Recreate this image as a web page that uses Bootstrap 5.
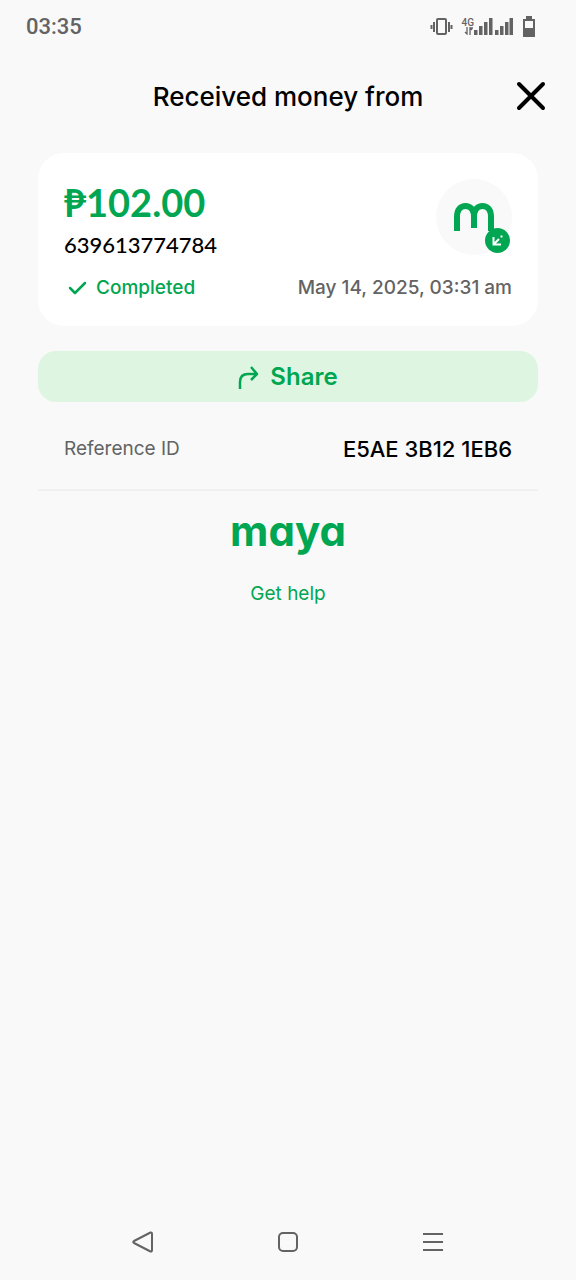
<!DOCTYPE html>
<html lang="en">
<head>
<meta charset="utf-8">
<meta name="viewport" content="width=device-width, initial-scale=1">
<title>Received money from</title>
<link rel="stylesheet" href="https://cdn.jsdelivr.net/npm/bootstrap@5.3.0/dist/css/bootstrap.min.css">
<style>
:root { --brand: #00a651; --ink: #000; --muted: #636363; --page: #f9f9f9; }
body { background: var(--page); color: var(--ink); font-family: Inter, "Liberation Sans", sans-serif; }
svg { display: block; flex: none; }
.status { height: 54px; padding: 0 40px 0 26px; color: var(--muted); font: 500 22px/28px Roboto, sans-serif; }
.net { font: 500 10px/8px Roboto, sans-serif; }
.topbar { height: 86px; }
.topbar h1 { font-size: 26px; line-height: 32px; font-weight: 500; }
.close-btn { right: 28px; top: 24px; }
.sheet { padding: 13px 38px 0; }
.receipt { border-radius: 26px; padding: 26px; }
.brand { color: var(--brand); }
.amount { font: 700 38px/46px Lato, Inter, sans-serif; }
.digits { font: 500 22px/40px Lato, sans-serif; }
.meta { font-size: 19px; line-height: 24px; font-weight: 500; margin-top: 11px; }
.soft { color: var(--muted); }
.avatar { width: 76px; height: 76px; background: var(--page); }
.direction { right: 2px; bottom: 2px; }
.share { height: 51px; margin-top: 25px; border-radius: 18px; background: #def6e1; font-size: 24px; font-weight: 600; line-height: 32px; }
.detail { padding: 34px 26px 27px; border-bottom: 2px solid #f0f0f0; }
.detail dt { font-size: 19px; line-height: 26px; font-weight: 400; }
.detail dd { font-size: 22px; line-height: 26px; font-weight: 500; }
.wordmark { font: 700 42px/48px Inter, sans-serif; font-feature-settings: "cv11"; margin-top: 16px; }
.help { font-size: 19px; line-height: 24px; margin-top: 27px; }
.sysnav { height: 76px; color: var(--muted); padding: 0 71px; }
</style>
</head>
<body>
<div class="min-vh-100 d-flex flex-column">
  <div class="status d-flex align-items-center justify-content-between">
    <span>03:35</span>
    <div class="d-flex align-items-center">
      <svg width="24" height="18" viewBox="0 0 24 18" fill="none" stroke="currentColor" stroke-width="2"><rect x="7" y="1" width="9" height="15" rx="1"/><path d="M4 4v10M1.500 7v4M19 4v10M21.500 7v4"/></svg>
      <div class="net ms-2 d-flex flex-column"><span>4G</span>
        <svg width="12" height="8" viewBox="0 0 12 8" fill="none" stroke="currentColor" stroke-width="1.300"><path d="M5 0v7L3 5M8 8V1l2 2M8 1h3"/></svg>
      </div>
      <svg width="40" height="18" viewBox="0 0 40 18" fill="currentColor"><path d="M0 12h3.500v5H0zM5 8h3.500v9H5zM10 4h3.500v13H10zM15 0h3.500v17H15zM21 12h3.500v5H21zM26 8h3.500v9H26zM31 4h3.500v13H31zM35.500 0H39v17h-3.500z"/></svg>
      <svg class="ms-2" width="14" height="22" viewBox="0 0 14 22"><path d="M4 0h6v3h3v18H1V3h3z" fill="currentColor"/><path d="M3 5h8v7H3z" fill="#f9f9f9"/></svg>
    </div>
  </div>
  <header class="topbar position-relative d-flex align-items-center justify-content-center">
    <h1 class="m-0">Received money from</h1>
    <button type="button" class="close-btn btn p-0 border-0 position-absolute" aria-label="Close">
      <svg width="34" height="36" viewBox="0 0 34 36" fill="none" stroke="#000" stroke-width="4" stroke-linecap="round"><path d="M5 6 29 30M29 6 5 30"/></svg>
    </button>
  </header>
  <main class="sheet">
    <section class="receipt bg-white">
      <div class="d-flex justify-content-between">
        <div>
          <div class="amount brand">₱102.00</div>
          <div class="digits">639613774784</div>
        </div>
        <div class="avatar rounded-circle position-relative d-flex align-items-center justify-content-center">
          <svg width="40" height="28" viewBox="0 0 40 28" fill="none" stroke="#00a651" stroke-width="6"><path d="M3 28V14C3 6 7 3 11.500 3S20 6 20 14v11V14C20 6 24 3 28.500 3S37 6 37 14v14"/></svg>
          <svg class="direction position-absolute" width="25" height="25" viewBox="0 0 25 25" fill="none" stroke="#fff" stroke-width="2"><circle cx="12.500" cy="12.500" r="12.500" fill="#00a651" stroke="none"/><path d="M8.500 9v7.500H16M9 16l5-5M15.500 8.500h2"/></svg>
        </div>
      </div>
      <div class="meta d-flex justify-content-between align-items-center">
        <span class="brand d-flex align-items-center"><svg class="me-2" width="24" height="20" viewBox="0 0 24 20" fill="none" stroke="currentColor" stroke-width="2.500" stroke-linecap="round" stroke-linejoin="round"><path d="m6 10 5 5 10-10"/></svg>Completed</span>
        <time class="soft" datetime="2025-05-14T03:31">May 14, 2025, 03:31 am</time>
      </div>
    </section>
    <button type="button" class="share brand btn border-0 w-100 p-0 d-flex align-items-center justify-content-center">
      <svg class="me-2" width="24" height="26" viewBox="0 0 24 26" fill="none" stroke="currentColor" stroke-width="2.500" stroke-linejoin="round"><path d="M2 25v-7c0-6 3-8 8-8h8M13 3l6 7-6 6"/></svg>Share
    </button>
    <dl class="detail d-flex justify-content-between m-0">
      <dt class="soft">Reference ID</dt>
      <dd class="m-0">E5AE 3B12 1EB6</dd>
    </dl>
    <div class="wordmark brand text-center">maya</div>
    <div class="help text-center"><a class="brand text-decoration-none" href="#help">Get help</a></div>
  </main>
  <nav class="sysnav mt-auto d-flex align-items-center justify-content-around" aria-label="System">
    <button type="button" class="btn p-0 border-0 soft" aria-label="Back"><svg width="24" height="24" viewBox="0 0 24 24" fill="none" stroke="currentColor" stroke-width="2" stroke-linejoin="round"><path d="M19.500 2.500Q21 2 21 4v16q0 2-1.500 1.500L3 13q-1.500-1 0-2z"/></svg></button>
    <button type="button" class="btn p-0 border-0 soft" aria-label="Home"><svg width="24" height="24" viewBox="0 0 24 24" fill="none" stroke="currentColor" stroke-width="2"><rect x="3" y="3" width="18" height="18" rx="4"/></svg></button>
    <button type="button" class="btn p-0 border-0 soft" aria-label="Recent apps"><svg width="24" height="24" viewBox="0 0 24 24" fill="none" stroke="currentColor" stroke-width="2"><path d="M2 4h20M2 12h20M2 20h20"/></svg></button>
  </nav>
</div>
<script src="https://cdn.jsdelivr.net/npm/bootstrap@5.3.0/dist/js/bootstrap.bundle.min.js"></script>
</body>
</html>
